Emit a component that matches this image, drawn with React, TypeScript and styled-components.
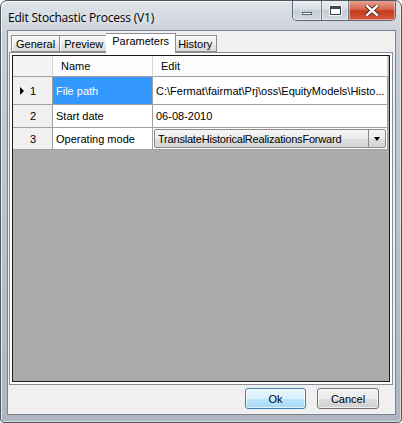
import React from 'react';
import styled, { createGlobalStyle } from 'styled-components';

const Global = createGlobalStyle`
    html, body {
        margin: 0;
        padding: 0;
        background: #ffffff;
    }
    * {
        box-sizing: border-box;
    }
`;

const Window = styled.div`
    width: 402px;
    height: 423px;
    display: flex;
    flex-direction: column;
    border: 1px solid #4f5761;
    border-radius: 7px 7px 4px 4px;
    padding: 0 5px 7px 6px;
    background: linear-gradient(180deg, #dfe4e9 0%, #c9d0d7 8%, #bcc4cc 40%, #aeb7c0 100%);
    box-shadow: inset 1px 1px 0 rgba(255, 255, 255, 0.7), inset -1px -1px 0 rgba(255, 255, 255, 0.5);
    font-family: 'Liberation Sans', Arial, sans-serif;
    overflow: hidden;
`;

const TitleBar = styled.div`
    height: 29px;
    display: flex;
    justify-content: space-between;
    align-items: flex-start;
`;

const Title = styled.div`
    margin-top: 8px;
    margin-left: 1px;
    font-family: 'Open Sans', 'Noto Sans', sans-serif;
    font-size: 12px;
    color: #000;
    text-shadow: 0 0 6px rgba(255, 255, 255, 0.9);
    letter-spacing: -0.2px;
`;

const Caption = styled.div`
    display: flex;
    margin-top: -1px;
    border: 1px solid #5b6470;
    border-top: none;
    border-radius: 0 0 5px 5px;
    overflow: hidden;
`;

const CaptionBtn = styled.div<{ $w: number; $close?: boolean }>`
    width: ${(p) => p.$w}px;
    height: 20px;
    display: flex;
    align-items: center;
    justify-content: center;
    border-right: ${(p) => (p.$close ? 'none' : '1px solid #6d7680')};
    background: ${(p) =>
        p.$close
            ? 'linear-gradient(180deg, #e9a897 0%, #d66a52 45%, #c43b1e 55%, #d85a3c 100%)'
            : 'linear-gradient(180deg, #eef1f4 0%, #d7dde3 45%, #c4ccd4 55%, #d3d9df 100%)'};
    box-shadow: inset 0 0 0 1px rgba(255, 255, 255, 0.45);
`;

const MinGlyph = styled.div`
    width: 10px;
    height: 3px;
    margin-top: 6px;
    background: #ffffff;
    border: 1px solid #5a6370;
`;

const MaxGlyph = styled.div`
    width: 11px;
    height: 9px;
    border: 1px solid #3c4450;
    border-top-width: 3px;
    background: #ffffff;
    box-shadow: 0 0 0 1px rgba(255, 255, 255, 0.8);
`;

const Client = styled.div`
    flex: 1;
    display: flex;
    flex-direction: column;
    background: #f0f0f0;
    border: 1px solid #7b838c;
    padding: 2px 1px 0 1px;
`;

const TabStrip = styled.div`
    height: 19px;
    display: flex;
    align-items: flex-end;
    padding-left: 2px;
    position: relative;
    z-index: 1;
`;

const Tab = styled.div<{ $active?: boolean }>`
    height: ${(p) => (p.$active ? '20px' : '17px')};
    margin: ${(p) => (p.$active ? '0 -2px -1px -2px' : '0')};
    padding: ${(p) => (p.$active ? '1px 6px 0 6px' : '0 4px')};
    display: flex;
    align-items: ${(p) => (p.$active ? 'flex-start' : 'center')};
    font-size: 11px;
    color: #000;
    border: 1px solid #898c95;
    border-bottom: ${(p) => (p.$active ? 'none' : '1px solid #898c95')};
    background: ${(p) => (p.$active ? '#ffffff' : 'linear-gradient(180deg, #f6f6f6 0%, #f0f0f0 50%, #e6e6e6 51%, #dcdcdc 100%)')};
    box-shadow: ${(p) => (p.$active ? 'none' : 'inset 1px 1px 0 #ffffff')};
    position: relative;
    z-index: ${(p) => (p.$active ? 2 : 1)};
    & + & {
        border-left: none;
    }
`;

const Panel = styled.div`
    flex: 1;
    display: flex;
    border: 1px solid #898c95;
    background: #ffffff;
    padding: 2px;
    margin-right: 1px;
`;

const Grid = styled.div`
    flex: 1;
    border: 1px solid #1a1a1a;
    background: #ababab;
    display: grid;
    grid-template-columns: 40px 100px 235px;
    grid-template-rows: 21px 28px 23px 22px;
    align-content: start;
    font-size: 11px;
`;

const HeadCell = styled.div<{ $corner?: boolean }>`
    display: flex;
    align-items: center;
    padding-left: 8px;
    background: ${(p) => (p.$corner ? '#f4f4f4' : '#fcfcfc')};
    border-right: 1px solid #d5d5d5;
    border-bottom: 1px solid #a0a0a0;
    color: #000;
`;

const RowHead = styled.div`
    display: flex;
    align-items: center;
    padding-left: 7px;
    background: #f0f0f0;
    border-right: 1px solid #a0a0a0;
    border-bottom: 1px solid #a0a0a0;
    color: #000;
`;

const Arrow = styled.span<{ $show?: boolean }>`
    width: 0;
    height: 0;
    margin-right: 6px;
    border-top: 4px solid transparent;
    border-bottom: 4px solid transparent;
    border-left: 4px solid ${(p) => (p.$show ? '#000' : 'transparent')};
`;

const Cell = styled.div<{ $selected?: boolean }>`
    display: flex;
    align-items: center;
    padding-left: 3px;
    background: ${(p) => (p.$selected ? '#3399ff' : '#ffffff')};
    color: ${(p) => (p.$selected ? '#ffffff' : '#000')};
    border-right: 1px solid #a0a0a0;
    border-bottom: 1px solid #a0a0a0;
    white-space: nowrap;
    overflow: hidden;
`;

const ComboCell = styled.div`
    display: flex;
    padding: 1px;
    background: #ffffff;
    border-right: 1px solid #a0a0a0;
    border-bottom: 1px solid #a0a0a0;
`;

const Combo = styled.div`
    flex: 1;
    display: flex;
    border: 1px solid #8a8a8a;
    border-radius: 2px;
    background: linear-gradient(180deg, #f6f6f6 0%, #ececec 50%, #dedede 51%, #d6d6d6 100%);
`;

const ComboText = styled.div`
    flex: 1;
    display: flex;
    align-items: center;
    padding-left: 3px;
    letter-spacing: -0.2px;
    white-space: nowrap;
`;

const ComboButton = styled.div`
    width: 17px;
    display: flex;
    align-items: center;
    justify-content: center;
    border-left: 1px solid #8a8a8a;
    &::after {
        content: '';
        border-left: 3px solid transparent;
        border-right: 3px solid transparent;
        border-top: 4px solid #000;
    }
`;

const Footer = styled.div`
    height: 29px;
    display: flex;
    justify-content: flex-end;
    align-items: flex-start;
    gap: 11px;
    padding: 3px 15px 0 0;
`;

const Button = styled.button<{ $focus?: boolean }>`
    width: ${(p) => (p.$focus ? 61 : 62)}px;
    height: 21px;
    padding: 0;
    font-family: 'Liberation Sans', Arial, sans-serif;
    font-size: 11px;
    color: #000;
    border: 1px solid ${(p) => (p.$focus ? '#3c7fb1' : '#707070')};
    border-radius: 3px;
    background: ${(p) =>
        p.$focus
            ? 'linear-gradient(180deg, #eaf6fd 0%, #d9f0fc 50%, #bee6fd 51%, #a7d9f5 100%)'
            : 'linear-gradient(180deg, #f2f2f2 0%, #ebebeb 50%, #dddddd 51%, #cfcfcf 100%)'};
    box-shadow: inset 0 0 0 1px rgba(255, 255, 255, 0.7);
`;

function CloseGlyph() {
    return (
        <svg width="14" height="11" viewBox="0 0 14 11">
            <path d="M2 1 L12 10 M12 1 L2 10" stroke="#4a1a10" strokeWidth="4" strokeLinecap="square" />
            <path d="M2 1 L12 10 M12 1 L2 10" stroke="#ffffff" strokeWidth="2.4" strokeLinecap="square" />
        </svg>
    );
}

export default function App() {
    return (
        <>
            <Global />
            <Window>
                <TitleBar>
                    <Title>Edit Stochastic Process (V1)</Title>
                    <Caption>
                        <CaptionBtn $w={29}>
                            <MinGlyph />
                        </CaptionBtn>
                        <CaptionBtn $w={27}>
                            <MaxGlyph />
                        </CaptionBtn>
                        <CaptionBtn $w={46} $close>
                            <CloseGlyph />
                        </CaptionBtn>
                    </Caption>
                </TitleBar>
                <Client>
                    <TabStrip>
                        <Tab>General</Tab>
                        <Tab>Preview</Tab>
                        <Tab $active>Parameters</Tab>
                        <Tab>History</Tab>
                    </TabStrip>
                    <Panel>
                        <Grid>
                            <HeadCell $corner />
                            <HeadCell>Name</HeadCell>
                            <HeadCell>Edit</HeadCell>

                            <RowHead>
                                <Arrow $show />1
                            </RowHead>
                            <Cell $selected>File path</Cell>
                            <Cell>C:\Fermat\fairmat\Prj\oss\EquityModels\Histo...</Cell>

                            <RowHead>
                                <Arrow />2
                            </RowHead>
                            <Cell>Start date</Cell>
                            <Cell>06-08-2010</Cell>

                            <RowHead>
                                <Arrow />3
                            </RowHead>
                            <Cell>Operating mode</Cell>
                            <ComboCell>
                                <Combo>
                                    <ComboText>TranslateHistoricalRealizationsForward</ComboText>
                                    <ComboButton />
                                </Combo>
                            </ComboCell>
                        </Grid>
                    </Panel>
                    <Footer>
                        <Button $focus>Ok</Button>
                        <Button>Cancel</Button>
                    </Footer>
                </Client>
            </Window>
        </>
    );
}
